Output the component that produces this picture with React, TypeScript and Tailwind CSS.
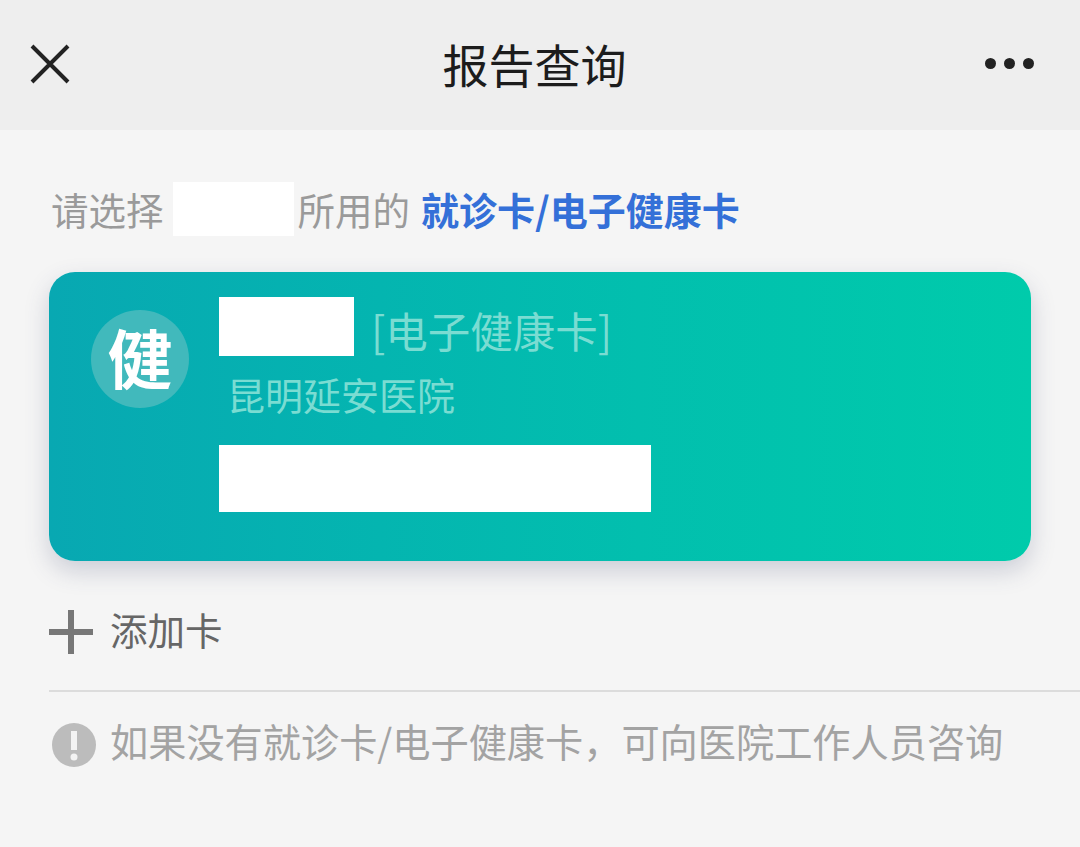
const cjk = { fontFamily: '"Noto Sans CJK SC", "Liberation Sans", sans-serif' };

export default function App() {
  return (
    <div style={cjk} className="h-[847px] w-[1080px] overflow-hidden bg-[#f5f5f5]">
      {/* Header */}
      <header className="flex h-[130px] items-center justify-between bg-[#eeeeee] pl-[30px] pr-[46px]">
        <svg width="40" height="40" viewBox="0 0 40 40" className="mb-[2px]">
          <path d="M2 2 L38 38 M38 2 L2 38" stroke="#222" strokeWidth="4" fill="none" />
        </svg>
        <h1 className="mb-[5px] ml-[14px] text-[46px] leading-none font-normal text-[#1c1c1c]">报告查询</h1>
        <div className="mb-[4px] flex gap-[8px]">
          <span className="h-[11px] w-[11px] rounded-full bg-[#222]" />
          <span className="h-[11px] w-[11px] rounded-full bg-[#222]" />
          <span className="h-[11px] w-[11px] rounded-full bg-[#222]" />
        </div>
      </header>

      <main className="pl-[49px] pr-[49px]">
        {/* Prompt */}
        <div className="mt-[52px] flex h-[54px] items-center pl-[2px] text-[37.5px] leading-none text-[#9a9a9a]">
          <span>请选择</span>
          <span className="ml-[9px] mr-[4px] h-[54px] w-[121px] bg-white" />
          <span>所用的</span>
          <span className="ml-[11px] text-[38px] font-bold text-[#3470d8]">就诊卡/电子健康卡</span>
        </div>

        {/* Card */}
        <section className="mt-[36px] flex h-[289px] rounded-[26px] bg-gradient-to-r from-[#08a8b2] via-[#02bfae] via-60% to-[#00cbab] pl-[42px] pt-[38px] shadow-[0_10px_24px_rgba(60,70,110,0.22)]">
          <div className="flex h-[98px] w-[98px] items-center justify-center rounded-full bg-[#41b9bc] pb-[6px] text-[65px] leading-none font-bold text-white">
            健
          </div>
          <div className="ml-[30px] -mt-[13px]">
            <div className="flex items-center">
              <span className="h-[59px] w-[135px] bg-white" />
              <span className="ml-[17px] mt-[7px] text-[42.5px] leading-none text-[#7adcd2]">[电子健康卡]</span>
            </div>
            <div className="ml-[8px] mt-[19px] text-[38px] leading-none text-[#7adcd2]">昆明延安医院</div>
            <div className="mt-[32px] h-[67px] w-[432px] bg-white" />
          </div>
        </section>

        {/* Add card */}
        <div className="mt-[48px] flex h-[46px] items-center">
          <svg width="44" height="44" viewBox="0 0 44 44">
            <path d="M22 0 V44 M0 22 H44" stroke="#777" strokeWidth="6" fill="none" />
          </svg>
          <span className="mb-[7px] ml-[17px] text-[37.5px] leading-none text-[#666]">添加卡</span>
        </div>
      </main>

      <hr className="ml-[49px] mt-[35px] border-t-2 border-[#dcdcdc]" />

      {/* Hint */}
      <div className="mt-[31px] flex h-[44px] items-center pl-[52px]">
        <svg width="44" height="44" viewBox="0 0 44 44">
          <circle cx="22" cy="22" r="22" fill="#bcbcbc" />
          <path d="M22 8 V27" stroke="#f3f3f3" strokeWidth="6" fill="none" />
          <circle cx="22" cy="34" r="3.5" fill="#f3f3f3" />
        </svg>
        <span className="mb-[7px] ml-[14px] whitespace-nowrap text-[38.2px] leading-none text-[#a3a3a3]">
          如果没有就诊卡/电子健康卡，可向医院工作人员咨询
        </span>
      </div>
    </div>
  );
}
